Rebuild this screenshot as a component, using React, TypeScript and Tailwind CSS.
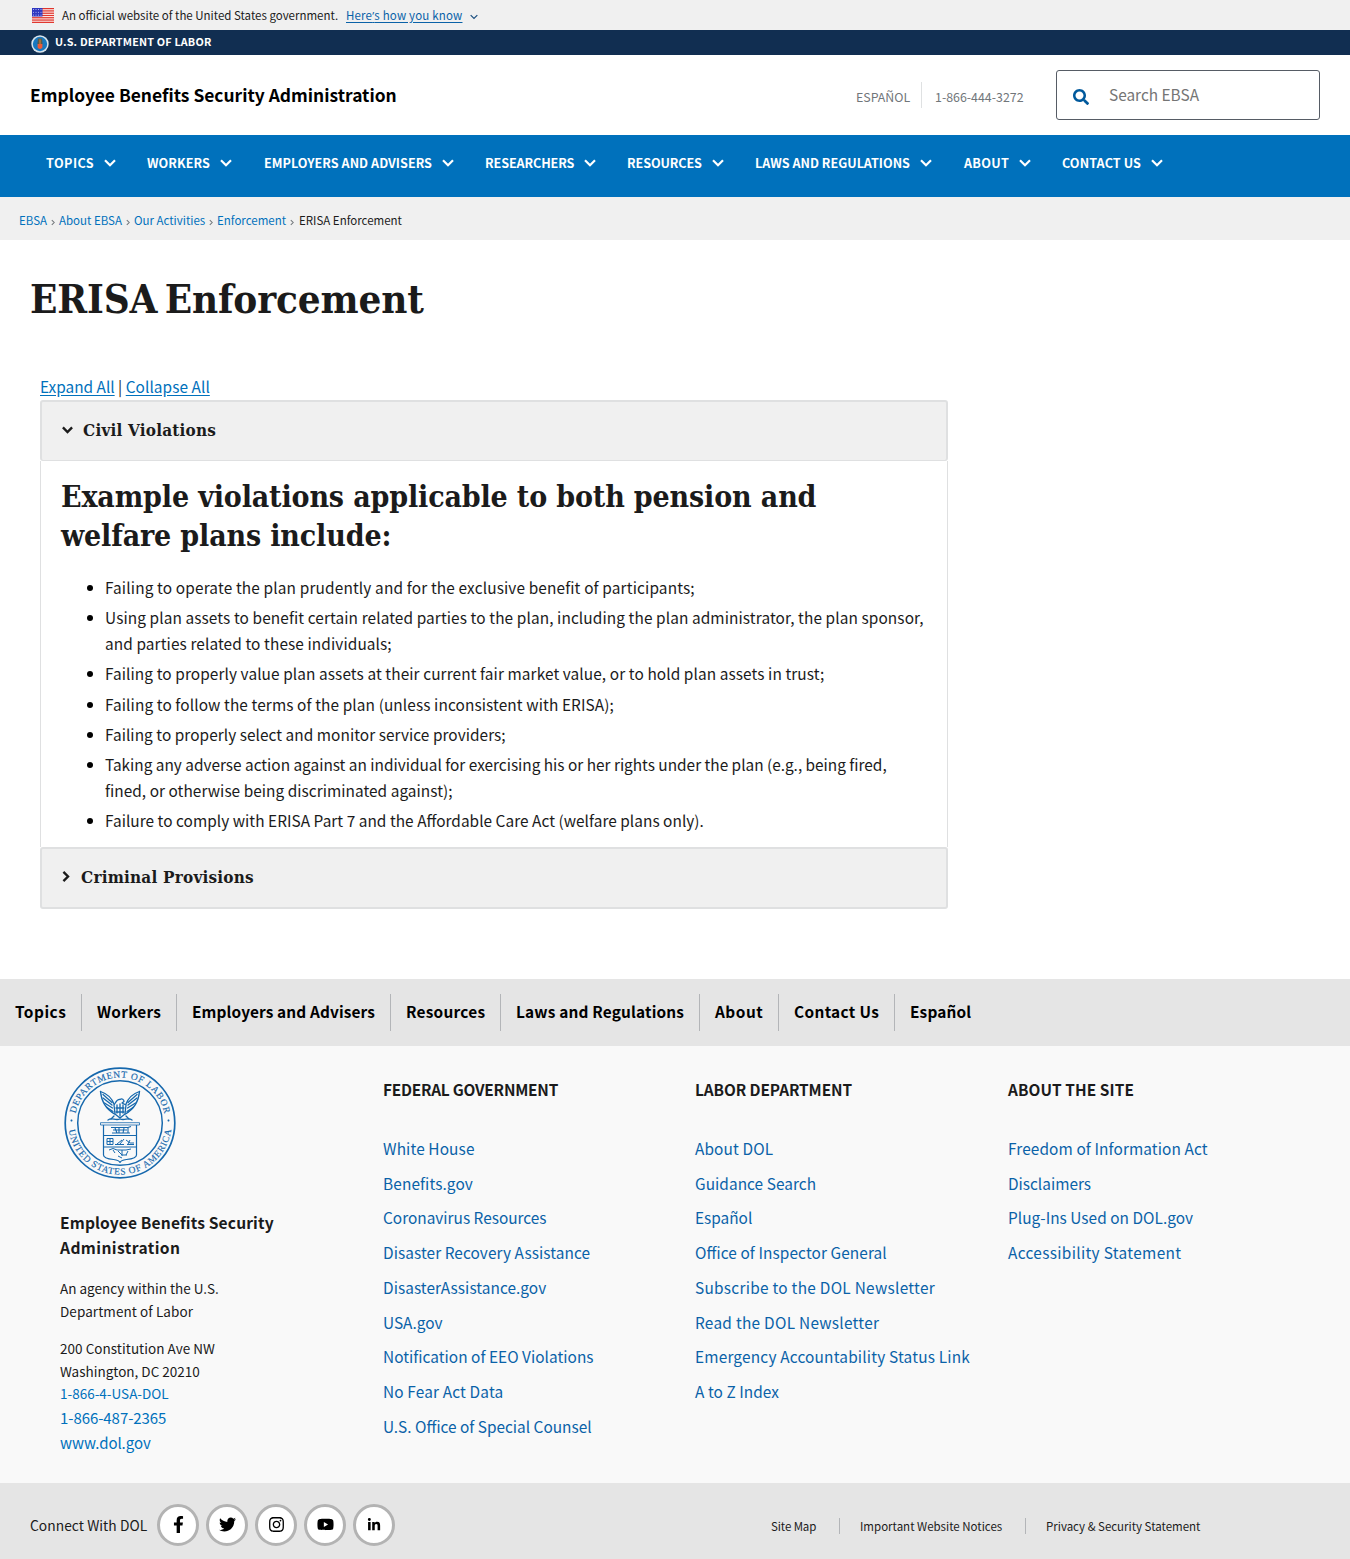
import React from "react";
import { FaFacebookF, FaTwitter, FaInstagram, FaYoutube, FaLinkedinIn, FaSearch } from "react-icons/fa";

const navItems = [
  { label: "TOPICS", w: "w-[101px]", t: "w-[48px] tracking-[0.45px]" },
  { label: "WORKERS", w: "w-[117px]", t: "w-[63px] tracking-[0.08px]" },
  { label: "EMPLOYERS AND ADVISERS", w: "w-[221px]", t: "w-[168px] tracking-[0.03px]" },
  { label: "RESEARCHERS", w: "w-[142px]", t: "w-[89px] tracking-[-0.1px]" },
  { label: "RESOURCES", w: "w-[128px]", t: "w-[75px] tracking-[-0.1px]" },
  { label: "LAWS AND REGULATIONS", w: "w-[209px]", t: "w-[155px]" },
  { label: "ABOUT", w: "w-[98px]", t: "w-[45px] tracking-[0.3px]" },
  { label: "CONTACT US", w: "w-[110px]", t: "w-[79px] tracking-[0.1px]" },
];

const footerNav = [
  { label: "Topics", w: "w-[82px] tracking-[0.5px]" },
  { label: "Workers", w: "w-[95px] tracking-[0.25px]" },
  { label: "Employers and Advisers", w: "w-[214px] tracking-[0.12px]" },
  { label: "Resources", w: "w-[110px] tracking-[0.25px]" },
  { label: "Laws and Regulations", w: "w-[199px] tracking-[0.17px]" },
  { label: "About", w: "w-[79px] tracking-[0.5px]" },
  { label: "Contact Us", w: "w-[116px] tracking-[0.35px]" },
  { label: "Español", w: "w-[91px] tracking-[0.15px]" },
];

const violations = [
  [{ text: "Failing to operate the plan prudently and for the exclusive benefit of participants;", t: "tracking-[0.143px]" }],
  [
    {
      text: "Using plan assets to benefit certain related parties to the plan, including the plan administrator, the plan sponsor,",
      t: "tracking-[0.1px]",
    },
    { text: "and parties related to these individuals;", t: "tracking-[0.1px]" },
  ],
  [
    {
      text: "Failing to properly value plan assets at their current fair market value, or to hold plan assets in trust;",
      t: "tracking-[0.09px]",
    },
  ],
  [{ text: "Failing to follow the terms of the plan (unless inconsistent with ERISA);", t: "tracking-[0.1px]" }],
  [{ text: "Failing to properly select and monitor service providers;", t: "tracking-[0.045px]" }],
  [
    {
      text: "Taking any adverse action against an individual for exercising his or her rights under the plan (e.g., being fired,",
      t: "tracking-[-0.01px]",
    },
    { text: "fined, or otherwise being discriminated against);", t: "tracking-[0.04px]" },
  ],
  [
    {
      text: "Failure to comply with ERISA Part 7 and the Affordable Care Act (welfare plans only).",
      t: "tracking-[0.035px]",
    },
  ],
];

const columns = [
  {
    title: "FEDERAL GOVERNMENT",
    w: "w-[312px]",
    t: "tracking-[-0.22px]",
    links: [
      { text: "White House", t: "tracking-[0.12px]" },
      { text: "Benefits.gov", t: "tracking-[0.12px]" },
      { text: "Coronavirus Resources", t: "" },
      { text: "Disaster Recovery Assistance", t: "tracking-[0.07px]" },
      { text: "DisasterAssistance.gov", t: "tracking-[0.05px]" },
      { text: "USA.gov", t: "" },
      { text: "Notification of EEO Violations", t: "tracking-[0.03px]" },
      { text: "No Fear Act Data", t: "tracking-[0.15px]" },
      { text: "U.S. Office of Special Counsel", t: "" },
    ],
  },
  {
    title: "LABOR DEPARTMENT",
    w: "w-[313px]",
    t: "tracking-[-0.08px]",
    links: [
      { text: "About DOL", t: "tracking-[0.12px]" },
      { text: "Guidance Search", t: "tracking-[0.05px]" },
      { text: "Español", t: "" },
      { text: "Office of Inspector General", t: "tracking-[0.09px]" },
      { text: "Subscribe to the DOL Newsletter", t: "tracking-[0.27px]" },
      { text: "Read the DOL Newsletter", t: "tracking-[0.27px]" },
      { text: "Emergency Accountability Status Link", t: "tracking-[0.18px]" },
      { text: "A to Z Index", t: "tracking-[0.05px]" },
    ],
  },
  {
    title: "ABOUT THE SITE",
    w: "w-[300px]",
    t: "tracking-[0.08px]",
    links: [
      { text: "Freedom of Information Act", t: "tracking-[0.1px]" },
      { text: "Disclaimers", t: "" },
      { text: "Plug-Ins Used on DOL.gov", t: "tracking-[0.03px]" },
      { text: "Accessibility Statement", t: "tracking-[0.33px]" },
    ],
  },
];

const crumbs = [
  { label: "EBSA", w: "w-[40px]" },
  { label: "About EBSA", w: "w-[75px]" },
  { label: "Our Activities", w: "w-[83px]" },
  { label: "Enforcement", w: "w-[82px]" },
];

function Flag() {
  return (
    <svg width="22" height="15" viewBox="0 0 22 15" className="shrink-0">
      <rect width="22" height="15" fill="#fff" />
      {[0, 1, 2, 3, 4, 5, 6].map((i) => (
        <rect key={i} y={i * 2.28} width="22" height="1.3" fill="#e0352c" />
      ))}
      <rect width="10.500" height="8.500" fill="#3038c0" />
      {[1.5, 4.2, 6.9].map((y) =>
        [1.5, 4, 6.5, 9].map((x) => <circle key={`${x}-${y}`} cx={x} cy={y} r="0.500" fill="#d5d7ff" />)
      )}
    </svg>
  );
}

function SmallSeal() {
  return (
    <svg width="18" height="18" viewBox="0 0 18 18" className="shrink-0">
      <circle cx="9" cy="9" r="8.700" fill="#d9e4ec" />
      <circle cx="9" cy="9" r="7.200" fill="#1878c0" />
      <path d="M7 3.500h4l.6 5.500H6.400z" fill="#5b5a4c" />
      <path d="M6.600 9h4.800v3.200c0 .8-1 1.300-2.400 1.800-1.400-.5-2.400-1-2.400-1.800z" fill="#ee5a36" />
      <path d="M8.500 4.500h1v4.500h-1z" fill="#d98a32" />
    </svg>
  );
}

function Seal() {
  return (
    <svg width="112" height="112" viewBox="0 0 112 112" fill="none" stroke="#1668ad">
      <circle cx="56" cy="56" r="54.800" strokeWidth="1.700" />
      <circle cx="56" cy="56" r="42.300" strokeWidth="1.500" />
      <defs>
        <path id="seal-top" d="M10.600 56a45.400 45.400 0 0 1 90.800 0" />
        <path id="seal-bottom" d="M4.400 56a51.600 51.600 0 0 0 103.200 0" />
      </defs>
      <g fill="#1668ad" stroke="#1668ad" strokeWidth="0.150" className="font-['Liberation_Serif']" fontSize="9.400">
        <text>
          <textPath href="#seal-top" startOffset="9.500" textLength="123.500">DEPARTMENT OF LABOR</textPath>
        </text>
        <text>
          <textPath href="#seal-bottom" startOffset="7" textLength="148">UNITED STATES OF AMERICA</textPath>
        </text>
        <circle cx="7.500" cy="53.500" r="0.900" />
        <circle cx="104.500" cy="53.500" r="0.900" />
      </g>
      <g strokeWidth="1.300" strokeLinejoin="round" strokeLinecap="round">
        <path d="M36.500 24.500c1 12 7 18.500 14 22.500M75.500 24.500c-1 12-7 18.500-14 22.500" />
        <path d="M36.500 24.500c6 2 11 6 13.500 12.500M75.500 24.500c-6 2-11 6-13.500 12.500" />
        <path d="M39 31l9 7M40.500 36l8 5M43 40.500l6 4M73 31l-9 7M71.500 36l-8 5M69 40.500l-6 4" />
        <path d="M39 27.500l9 8M73 27.500l-9 8" />
        <path d="M50 38c2-3 3-6 6-5.500 2-1.500 4 0 4 2l-2 1.500c2 1 4 2 4 2M50 38l1 9 5 4 5-4 1-9" />
        <path d="M53 38v8M56 37v12M59 38v8M52 41h8M52 45h8M50 49l-3 3M62 49l3 3" />
        <path d="M44 53c4-3 7 1 12-1 5 2 8-2 12 1" />
      </g>
      <g strokeWidth="1.200" strokeLinejoin="round">
        <path d="M36.500 55.700h39v2.300h-39z" strokeWidth=".8" />
        <path d="M39.500 58v30c0 3 5 4 10 4.500 4 .5 6 1.500 6.500 3 .5-1.500 2.500-2.500 6.500-3 5-.5 10-1.500 10-4.500V58" />
        <path d="M40 68.500h32M40 80h32" />
        <path d="M47 60.500h17l3-1M49 63h14M51 61l2 5M55 61v5M60 61l-1 5M64 60v6M48 66h18" strokeWidth="1.100" />
        <path d="M43 71.500h6v6h-6zM43 74.500h6M46 71.500v6M51 77.500h9M53 77l5-4M56 77l4-5M62 73l4 3h4M63 77.500h7M64 77l2-4" strokeWidth="1" />
        <path d="M45 83l4-1.500 4 1.500h9l5-1M49 83l2 3M54 84l4 4 5 0M58 83v6M64 84l-2 4M54 89l4 2" strokeWidth="1" />
      </g>
    </svg>
  );
}

function Chevron({ className, size, stroke }: { className?: string; size: string; stroke: string }) {
  return (
    <svg viewBox="0 0 12 8" className={`${size} ${className ?? ""} shrink-0`} fill="none" stroke="currentColor" strokeWidth={stroke}>
      <path d="M1 1.200l5 5 5-5" />
    </svg>
  );
}

const socials = [
  { Icon: FaFacebookF, size: "size-[17px]" },
  { Icon: FaTwitter, size: "size-[17px]" },
  { Icon: FaInstagram, size: "size-[17px]" },
  { Icon: FaYoutube, size: "size-[17px]" },
  { Icon: FaLinkedinIn, size: "size-[14px]" },
];

export default function App() {
  return (
    <div className="w-[1350px] h-[1559px] overflow-hidden bg-white text-[#1b1b1b] whitespace-nowrap font-['Noto_Sans_CJK_SC',sans-serif] [font-feature-settings:'liga'_1]">
      <div className="flex h-[30px] items-center bg-[#f0f0f0] pl-8 text-[11.500px] leading-[30px]">
        <Flag />
        <span className="ml-2 w-[284px]">An official website of the United States government.</span>
        <a className="tracking-[0.180px] text-[#0a62a8] underline underline-offset-2">
          Here<span className="font-['Open_Sans']">’</span>s how you know
        </a>
        <Chevron size="w-[8px] h-[6px]" stroke="1.800" className="ml-2 mt-[3px] text-[#1b4f80]" />
      </div>

      <div className="flex h-[25px] items-start bg-[#112e51] pl-[31px] text-[10.800px] font-bold leading-[23px] text-white">
        <div className="pt-[5px]"><SmallSeal /></div>
        <span className="ml-[6px] tracking-[0.180px]">U.S. DEPARTMENT OF LABOR</span>
      </div>

      <header className="flex h-20 items-center pl-[30px]">
        <div className="w-[826px] pb-px text-[17.400px] font-bold leading-6 text-black">Employee Benefits Security Administration</div>
        <div className="flex w-[200px] items-center text-[12.400px] leading-[22px] text-[#71767a]">
          <span className="w-[66px] border-r border-[#dfe1e2] pt-[4px]">ESPAÑOL</span>
          <span className="pl-[13px] pt-[4px]">1-866-444-3272</span>
        </div>
        <div className="flex h-[50px] w-[264px] items-center rounded-[3px] border border-[#565c65] pl-4 text-[15.400px] text-[#757575]">
          <FaSearch className="mt-1 size-4 text-[#00599c]" />
          <span className="ml-5 pb-px">Search EBSA</span>
        </div>
      </header>

      <nav className="flex h-[62px] items-start bg-[#0071bc] pl-[46px] pt-4 text-[12.600px] font-bold leading-6 text-white">
        {navItems.map((n) => (
          <div key={n.label} className={`${n.w} flex items-center`}>
            <span className={n.t}>{n.label}</span>
            <Chevron size="w-[12px] h-[8px]" stroke="2.200" className="ml-[10px]" />
          </div>
        ))}
      </nav>

      <div className="flex h-[43px] items-center bg-[#f0f0f0] pl-[19px] pt-[5px] text-[11.500px]">
        {crumbs.map((c) => (
          <div key={c.label} className={`${c.w} flex items-center text-[#0071bc]`}>
            <span>{c.label}</span>
            <svg viewBox="0 0 5 8" className="ml-[4px] mt-[2px] h-[7px] w-[4px] shrink-0" fill="none" stroke="#71767a" strokeWidth="1.300">
              <path d="M1 1l3 3-3 3" />
            </svg>
          </div>
        ))}
        <span>ERISA Enforcement</span>
      </div>

      <main className="h-[739px]">
        <h1 className="h-[135px] pl-[30px] pt-[33px] font-['DejaVu_Serif_Condensed','DejaVu_Serif',serif] text-[40px] font-bold leading-[51px] tracking-[-0.150px] [word-spacing:-5px]">
          ERISA Enforcement
        </h1>
        <div className="ml-10 w-[908px]">
          <div className="h-[25px] text-[15.400px] leading-[23px]">
            <a className="text-[#0071bc] underline underline-offset-2">Expand All</a> |{" "}
            <a className="tracking-[0.060px] text-[#0071bc] underline underline-offset-2">Collapse All</a>
          </div>
          <div className="flex h-[61px] items-center rounded-[3px] border-2 border-b border-[#dfe0e1] bg-[#f0f0f0] pl-5 font-['DejaVu_Serif_Condensed','DejaVu_Serif',serif] text-[17px] font-bold">
            <Chevron size="w-[11px] h-[8px]" stroke="2.600" className="mb-[2px]" />
            <span className="ml-[10px] tracking-[0.200px]">Civil Violations</span>
          </div>
          <div className="h-[386px] border-x border-[#dfe0e1] pl-5 pt-4">
            <h2 className="font-['DejaVu_Serif_Condensed','DejaVu_Serif',serif] text-[30px] font-bold leading-[39px] tracking-[-0.150px]">
              Example violations applicable to both pension and
              <br />
              welfare plans include:
            </h2>
            <ul className="ml-11 mt-[19px] flex flex-col gap-[4.200px] text-[15.400px] leading-[26px]">
              {violations.map((lines) => (
                <li key={lines[0].text} className="relative">
                  <span className="absolute -left-[18px] top-[11px] size-[6px] rounded-full bg-black" />
                  {lines.map((line) => (
                    <div key={line.text} className={line.t}>{line.text}</div>
                  ))}
                </li>
              ))}
            </ul>
          </div>
          <div className="flex h-[62px] items-center rounded-[3px] border-2 border-[#dfe0e1] bg-[#f0f0f0] pl-5 font-['DejaVu_Serif_Condensed','DejaVu_Serif',serif] text-[17px] font-bold">
            <svg viewBox="0 0 8 12" className="mb-[3px] h-[11px] w-[8px]" fill="none" stroke="currentColor" strokeWidth="2.600">
              <path d="M1.200 1l5 5-5 5" />
            </svg>
            <span className="ml-[11px] tracking-[0.200px]">Criminal Provisions</span>
          </div>
        </div>
      </main>

      <div className="flex h-[67px] items-center bg-[#e5e5e5] text-[15.400px] font-bold leading-[35px] text-black">
        {footerNav.map((f, i) => (
          <div key={f.label} className={`${f.w} ${i < 7 ? "border-r border-[#b3b5b8]" : ""} pb-[2px] pl-[15px]`}>
            {f.label}
          </div>
        ))}
      </div>

      <footer className="flex h-[437px] bg-[#f9f9f9]">
        <div className="w-[383px] pl-[60px] pt-[21px]">
          <div className="ml-1"><Seal /></div>
          <div className="mt-[31px] text-[15.600px] font-bold leading-[25px]">
            <div className="tracking-[0.130px]">Employee Benefits Security</div>
            <div className="tracking-[0.400px]">Administration</div>
          </div>
          <div className="mt-[17px] text-[13.500px] leading-[23px]">
            An agency within the U.S.
            <br />
            <span className="tracking-[0.080px]">Department of Labor</span>
          </div>
          <div className="mt-[14px] text-[13.500px] leading-[22.500px]">
            <span className="tracking-[0.040px]">200 Constitution Ave NW</span>
            <br />
            Washington, DC 20210
            <br />
            <a className="text-[#0071bc]">1-866-4-USA-DOL</a>
          </div>
          <div className="text-[15px] leading-[25px] tracking-[-0.060px] text-[#0071bc]">
            1-866-487-2365
            <br />
            www.dol.gov
          </div>
        </div>
        {columns.map((c) => (
          <div key={c.title} className={`${c.w} pt-[31px] text-[15.400px]`}>
            <h3 className={`${c.t} leading-6 font-bold`}>{c.title}</h3>
            <ul className="mt-[30px] leading-[34.700px] text-[#0a62a8]">
              {c.links.map((l) => (
                <li key={l.text} className={l.t}>{l.text}</li>
              ))}
            </ul>
          </div>
        ))}
      </footer>

      <div className="flex h-[76px] items-center bg-[#e5e5e5] pl-[30px] pt-2">
        <span className="w-[127px] text-[13.800px] tracking-[0.040px]">Connect With DOL</span>
        <div className="flex w-[614px] gap-[7px]">
          {socials.map(({ Icon, size }, i) => (
            <span key={i} className="flex size-[42px] items-center justify-center rounded-full border-[3px] border-[#b3b3b3] bg-white pb-px text-black">
              <Icon className={size} />
            </span>
          ))}
        </div>
        <div className="flex items-center pt-[2px] text-[11.500px] leading-4">
          <span className="w-[69px] border-r border-[#b3b5b8] tracking-[-0.100px]">Site Map</span>
          <span className="w-[186px] border-r border-[#b3b5b8] pl-5">Important Website Notices</span>
          <span className="pl-5">Privacy &amp; Security Statement</span>
        </div>
      </div>
    </div>
  );
}
